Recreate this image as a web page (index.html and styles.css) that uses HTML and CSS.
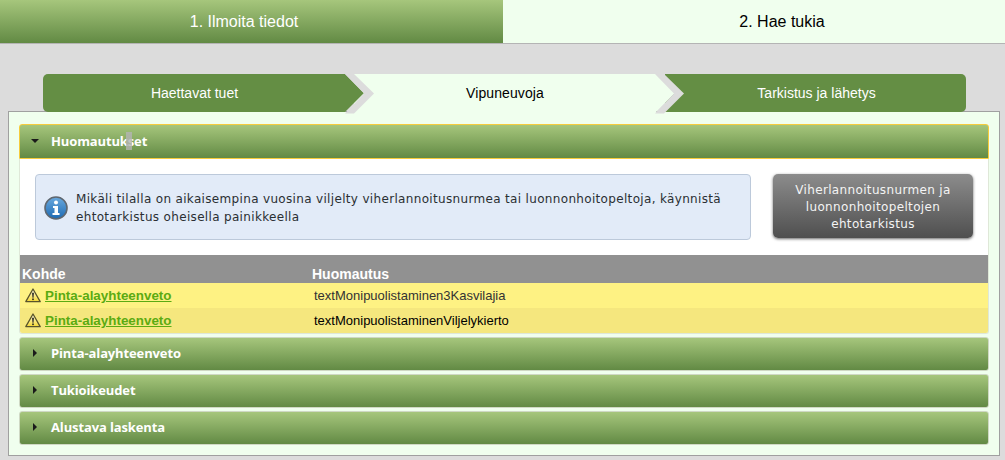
FILE: index.html
```html
<!DOCTYPE html>
<html lang="fi">
<head>
<meta charset="utf-8">
<title>Hae tukia</title>
<link rel="stylesheet" href="styles.css">
</head>
<body>
<header class="topbar">
  <div class="top-step top-step-done">1. Ilmoita tiedot</div>
  <div class="top-step top-step-active">2. Hae tukia</div>
</header>
<nav class="wizard">
  <div class="wiz wiz-first">Haettavat tuet</div>
  <div class="wiz wiz-mid">Vipuneuvoja</div>
  <div class="wiz wiz-last">Tarkistus ja lähetys</div>
  <svg class="chev chev-a" width="30" height="40" viewBox="0 0 30 40"><path d="M0 0H9L29 19.500L9 39.500H0L19 19.500Z" fill="#dcdcdc"/></svg>
  <svg class="chev chev-b" width="30" height="40" viewBox="0 0 30 40"><path d="M0 0H9L29 19.500L9 39.500H0L19 19.500Z" fill="#dcdcdc"/></svg>
</nav>
<main class="panel">
  <section class="acc acc-open">
    <h3 class="acc-head acc-head-open">
      <svg class="tri" width="8" height="8" viewBox="0 0 8 8"><path d="M0 2H8L4 6Z" fill="#1a1a1a"/></svg>
      <span class="acc-title">Huomautukset</span>
      <span class="cursor-mark"></span>
    </h3>
    <div class="acc-body">
      <div class="notice-row">
        <div class="notice">
          <svg class="info" width="24" height="24" viewBox="0 0 24 24">
            <defs><linearGradient id="ig" x1="0" y1="0" x2="0" y2="1"><stop offset="0" stop-color="#6aa9de"/><stop offset="1" stop-color="#1d6ab3"/></linearGradient></defs>
            <circle cx="12" cy="12" r="11" fill="url(#ig)" stroke="#5f6770" stroke-width="1.600"/>
            <circle cx="12" cy="6.500" r="2" fill="#fff"/>
            <path d="M9 10H14V17H15.500V19H8.500V17H10.500V12H9Z" fill="#fff"/>
          </svg>
          <p class="notice-text">Mikäli tilalla on aikaisempina vuosina viljelty viherlannoitusnurmea tai luonnonhoitopeltoja, käynnistä ehtotarkistus oheisella painikkeella</p>
        </div>
        <button class="check-btn">Viherlannoitusnurmen ja luonnonhoitopeltojen ehtotarkistus</button>
      </div>
      <div class="table">
        <div class="tr th"><div class="c1">Kohde</div><div class="c2">Huomautus</div></div>
        <div class="tr row-a">
          <div class="c1 cell-link">
            <svg class="warn" width="16" height="15" viewBox="0 0 16 15"><defs><linearGradient id="wg" x1="0" y1="0" x2="0" y2="1"><stop offset="0" stop-color="#fffde8"/><stop offset="1" stop-color="#f5d830"/></linearGradient></defs><path d="M8 1L15.200 13.600H.8Z" fill="url(#wg)" stroke="#59542a" stroke-width="1.300" stroke-linejoin="round"/><path d="M7.100 4.800H8.900L8.500 9.800H7.500Z" fill="#222"/><rect x="7.200" y="10.500" width="1.600" height="1.600" fill="#222"/></svg>
            <a class="lnk" href="#">Pinta-alayhteenveto</a>
          </div>
          <div class="c2 msg msg-a">textMonipuolistaminen3Kasvilajia</div>
        </div>
        <div class="tr row-b">
          <div class="c1 cell-link">
            <svg class="warn" width="16" height="15" viewBox="0 0 16 15"><path d="M8 1L15.200 13.600H.8Z" fill="url(#wg)" stroke="#59542a" stroke-width="1.300" stroke-linejoin="round"/><path d="M7.100 4.800H8.900L8.500 9.800H7.500Z" fill="#222"/><rect x="7.200" y="10.500" width="1.600" height="1.600" fill="#222"/></svg>
            <a class="lnk" href="#">Pinta-alayhteenveto</a>
          </div>
          <div class="c2 msg">textMonipuolistaminenViljelykierto</div>
        </div>
      </div>
    </div>
  </section>
  <h3 class="acc-head"><svg class="tri" width="8" height="8" viewBox="0 0 8 8"><path d="M2 0L6 4L2 8Z" fill="#1a1a1a"/></svg><span class="acc-title">Pinta-alayhteenveto</span></h3>
  <h3 class="acc-head"><svg class="tri" width="8" height="8" viewBox="0 0 8 8"><path d="M2 0L6 4L2 8Z" fill="#1a1a1a"/></svg><span class="acc-title">Tukioikeudet</span></h3>
  <h3 class="acc-head"><svg class="tri" width="8" height="8" viewBox="0 0 8 8"><path d="M2 0L6 4L2 8Z" fill="#1a1a1a"/></svg><span class="acc-title">Alustava laskenta</span></h3>
</main>
</body>
</html>
```
FILE: styles.css
```css
* { box-sizing: border-box; }
html, body { margin: 0; padding: 0; height: 100%; overflow: hidden; }
body { background: #dcdcdc; font-family: "Liberation Sans", Arial, sans-serif; color: #000; }

.topbar { display: flex; height: 44px; border-bottom: 1px solid #b4b4b4; }
.top-step { flex: 0 0 auto; display: flex; align-items: center; justify-content: center; font-size: 16px; }
.top-step-done { width: 503px; padding-right: 15px; color: #fff; background: linear-gradient(#a6c67c, #628a44); }
.top-step-active { width: 502px; padding-left: 56px; background: #f0ffee; color: #000; }

.wizard { position: relative; z-index: 2; display: flex; height: 38px; margin: 30px 39px 0 43px; font-size: 14px; }
.wiz { position: relative; display: flex; align-items: center; justify-content: center; height: 38px; }
.wiz-first { z-index: 3; width: 321px; padding-right: 18px; color: #fff; background: #648e44; border-radius: 5px 0 0 5px; clip-path: polygon(0 0, 302px 0, 321px 19px, 302px 38px, 0 38px); }
.wiz-mid { z-index: 2; width: 322px; margin-left: -10px; padding-right: 20px; background: #f0ffee; letter-spacing: .1px; clip-path: polygon(0 0, 302px 0, 321px 19px, 302px 38px, 0 38px); }
.wiz-last { z-index: 1; flex: 1; margin-left: -11px; padding-left: 2px; color: #fff; background: #648e44; border-radius: 0 5px 5px 0; }
.chev { position: absolute; z-index: 4; top: 0; }
.chev-a { left: 302px; }
.chev-b { left: 612px; }

.panel { height: 345px; margin: -1px 5px 0 8px; padding: 12px 10px 0; background: #f0ffee; border: 1px solid #a0a0a0; }

.acc-head { position: relative; display: flex; align-items: center; height: 34px; margin: 0 0 3px; padding: 0 0 2px 11px; border: 1px solid #cfd8c4; border-radius: 3px; background: linear-gradient(#a6c67c, #628a44); font-family: "Open Sans", "DejaVu Sans", sans-serif; font-size: 13px; font-weight: 700; letter-spacing: -.13px; color: #fff; }
.acc-head-open { height: 35px; margin: 0; border: 1px solid #f6cc3c; border-radius: 3px 3px 0 0; }
.tri { flex: 0 0 8px; }
.acc-title { margin-left: 12px; }
.cursor-mark { position: absolute; left: 106px; top: 7px; width: 6px; height: 18px; background: rgba(180,180,180,.8); }

.acc-open { margin-bottom: 3px; }
.acc-body { background: #fff; border: 1px solid #dfe8d8; border-top: 0; border-radius: 0 0 3px 3px; overflow: hidden; }
.notice-row { display: flex; align-items: flex-start; gap: 22px; padding: 15px; }
.notice { display: flex; align-items: center; gap: 8px; width: 716px; height: 66px; padding: 1px 12px 0 8px; background: #e2ebf8; border: 1px solid #bcc9da; border-radius: 4px; }
.info { flex: 0 0 24px; }
.notice-text { margin: 0; font-family: "DejaVu Sans", sans-serif; font-size: 12px; line-height: 18px; letter-spacing: .33px; color: #2a2f33; }
.check-btn { width: 200px; height: 64px; padding: 2px 10px 0; border: 0; border-radius: 5px; background: linear-gradient(#8c8c8c, #4f4f4f); box-shadow: 0 1px 3px #666; color: #f4f4f4; font-family: "DejaVu Sans", sans-serif; font-size: 12px; line-height: 17px; letter-spacing: .35px; text-align: center; }

.tr { display: flex; align-items: center; }
.c1 { width: 292px; }
.c2 { flex: 1; }
.th { height: 28px; align-items: flex-end; padding-left: 2px; background: #919191; color: #fff; font-size: 14px; font-weight: 700; line-height: 17px; }
.th .c1 { width: 290px; }
.row-a, .row-b { height: 25px; font-size: 13px; }
.row-a { background: #fef283; }
.row-b { background: #f5e77e; }
.cell-link { display: flex; align-items: center; gap: 4px; padding-left: 5px; }
.lnk { font-size: 13.4px; font-weight: 700; color: #5bab12; }
.msg { padding-left: 2px; }
.msg-a { color: #333; }
.warn { flex: 0 0 16px; }
```
